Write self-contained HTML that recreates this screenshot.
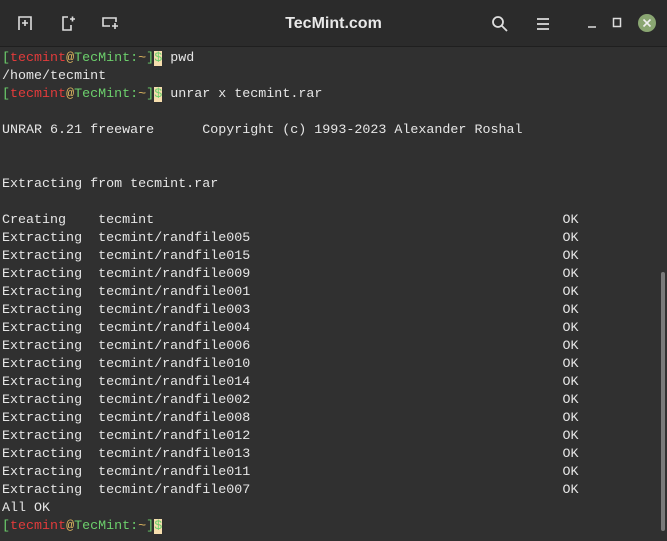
<!DOCTYPE html>
<html><head><style>
body{margin:0;width:667px;height:541px;background:#303030;overflow:hidden;position:relative;font-family:"Liberation Mono",monospace}
.tb{position:absolute;left:0;top:0;width:667px;height:46px;background:#2b2b2b;border-bottom:1px solid #1f1f1f}
.title{position:absolute;left:0;width:667px;top:15px;text-align:center;color:#e8e8e8;font:bold 16px "Liberation Sans",sans-serif}
.term{position:absolute;left:2px;top:50px;color:#e6e6e6;font-size:13.35px;line-height:18px;white-space:pre}
.g{color:#6ccf6c}.r{color:#e23b3b}.y{color:#e0b860}.c{background:#f6deae;color:#6ccf6c}
.sb{position:absolute;left:661px;top:272px;width:4px;height:259px;background:#7a7a7a;border-radius:2px}
svg{position:absolute}
</style></head><body>
<div class="tb"></div>
<div class="title">TecMint.com</div>
<svg style="left:17px;top:15px" width="16" height="16" fill="none" stroke="#ddd" stroke-width="1.6"><path d="M2 15V2h12v13M5 8h6M8 5v6"/></svg>
<svg style="left:60px;top:15px" width="16" height="16" fill="none" stroke="#ddd" stroke-width="1.6"><path d="M8 2H3v13h8v-5M10 4h5M12.5 1.5v5"/></svg>
<svg style="left:101px;top:15px" width="18" height="16" fill="none" stroke="#ddd" stroke-width="1.6"><path d="M9 11H2V3h13v4M11 11h6M14 8v6"/></svg>
<svg style="left:491px;top:15px" width="18" height="18" fill="none" stroke="#ddd" stroke-width="1.8"><circle cx="7" cy="7" r="5"/><path d="M11 11l5 5"/></svg>
<svg style="left:536px;top:17px" width="14" height="14" stroke="#ddd" stroke-width="1.8"><path d="M1 2h12M1 7h12M1 12h12"/></svg>
<svg style="left:587px;top:17px" width="12" height="12" stroke="#ddd" stroke-width="1.5"><path d="M1 10h8"/></svg>
<svg style="left:612px;top:17px" width="12" height="12" fill="none" stroke="#ddd" stroke-width="1.5"><rect x="1.5" y="1.5" width="7" height="8"/></svg>
<svg style="left:637px;top:13px" width="20" height="20"><circle cx="10" cy="10" r="9" fill="#8aa672"/><path d="M6.5 6.5l7 7M13.5 6.5l-7 7" stroke="#eee" stroke-width="1.6"/></svg>
<div class="term"><span class="g">[</span><span class="r">tecmint</span><span class="y">@</span><span class="g">TecMint:</span><span class="y">~</span><span class="g">]</span><span class="c">$</span> pwd
/home/tecmint
<span class="g">[</span><span class="r">tecmint</span><span class="y">@</span><span class="g">TecMint:</span><span class="y">~</span><span class="g">]</span><span class="c">$</span> unrar x tecmint.rar

UNRAR 6.21 freeware      Copyright (c) 1993-2023 Alexander Roshal


Extracting from tecmint.rar

Creating    tecmint                                                   OK
Extracting  tecmint/randfile005                                       OK
Extracting  tecmint/randfile015                                       OK
Extracting  tecmint/randfile009                                       OK
Extracting  tecmint/randfile001                                       OK
Extracting  tecmint/randfile003                                       OK
Extracting  tecmint/randfile004                                       OK
Extracting  tecmint/randfile006                                       OK
Extracting  tecmint/randfile010                                       OK
Extracting  tecmint/randfile014                                       OK
Extracting  tecmint/randfile002                                       OK
Extracting  tecmint/randfile008                                       OK
Extracting  tecmint/randfile012                                       OK
Extracting  tecmint/randfile013                                       OK
Extracting  tecmint/randfile011                                       OK
Extracting  tecmint/randfile007                                       OK
All OK
<span class="g">[</span><span class="r">tecmint</span><span class="y">@</span><span class="g">TecMint:</span><span class="y">~</span><span class="g">]</span><span class="c">$</span></div>
<div class="sb"></div>
</body></html>
